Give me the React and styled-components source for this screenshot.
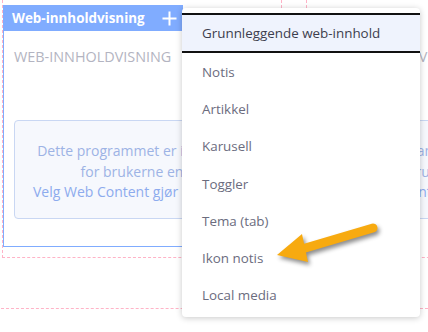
import React from 'react';
import styled, { createGlobalStyle } from 'styled-components';

const Global = createGlobalStyle`
  html, body { margin: 0; padding: 0; background: #fff; }
  body { font-family: "Open Sans", "Noto Sans", sans-serif; }
  * { box-sizing: border-box; }
`;

const Page = styled.div`
  position: relative;
  width: 428px;
  height: 332px;
  overflow: hidden;
  background: #fff;
`;

const Row = styled.div`
  display: flex;
  gap: 24px;
  padding-left: 2px;
`;

const DropColumn = styled.div`
  flex: 0 0 280px;
  height: 258px;
  border: 1px dashed #ffb3c7;
  border-top: none;
  padding: 5px 0 10px;
`;

const NextRow = styled.div`
  margin-top: 50px;
  margin-left: -4px;
  height: 40px;
  border-top: 1px dashed #ffb3c7;
`;

const Portlet = styled.section`
  display: flex;
  flex-direction: column;
  height: 242px;
`;

const Topper = styled.header`
  align-self: flex-start;
  display: flex;
  align-items: center;
  justify-content: space-between;
  width: 180px;
  height: 26px;
  padding: 0 6px 0 9px;
  background: #80acff;
  color: #fff;
  visibility: ${p => (p.$active ? 'visible' : 'hidden')};
`;

const TopperTitle = styled.h2`
  margin: 0;
  font-size: 13.4px;
  font-weight: 700;
  line-height: 26px;
`;

const Body = styled.div`
  flex: 1;
  border: 1px solid ${p => (p.$active ? '#80acff' : 'transparent')};
  border-top: none;
  padding: 16px 10px 0;
`;

const PortletName = styled.div`
  font-size: 14.4px;
  line-height: 20px;
  color: #b3b4c1;
  text-transform: uppercase;
`;

const InfoBox = styled.div`
  margin-top: 53px;
  height: 99px;
  padding-top: 20px;
  border: 1px solid #c9d7f3;
  border-radius: 4px;
  background: #f6f8fd;
  text-align: center;
  font-size: 14px;
  line-height: 20.5px;
  color: #9db3e5;
`;

const InfoLink = styled.a`
  display: block;
  color: #8dabee;
  text-decoration: none;
`;

const Menu = styled.ul`
  position: absolute;
  left: 182px;
  top: 8px;
  width: 238px;
  height: 309px;
  margin: 0;
  padding: 5px 0;
  list-style: none;
  background: #fff;
  border-radius: 4px;
  box-shadow: 0 1px 6px rgba(0, 0, 0, 0.22);
`;

const MenuItem = styled.li`
  height: ${p => (p.$focused ? '40px' : '37.3px')};
  padding: 0 20px;
  display: flex;
  align-items: center;
  font-size: 13.4px;
  color: ${p => (p.$focused ? '#3d3e4d' : '#6b6c7e')};
  background: ${p => (p.$focused ? '#eff3fd' : 'transparent')};
  border-top: ${p => (p.$focused ? '2px solid #111' : 'none')};
  border-bottom: ${p => (p.$focused ? '2px solid #111' : 'none')};
`;

const Pointer = styled.svg`
  position: absolute;
  left: 268px;
  top: 216px;
  width: 120px;
  height: 60px;
  overflow: visible;
  filter: drop-shadow(2px 3px 2px rgba(0, 0, 0, 0.45));
`;

const PlusIcon = () => (
  <svg width="15" height="15" viewBox="0 0 15 15" aria-hidden="true">
    <path d="M7.5 0.5v14M0.5 7.5h14" stroke="#fff" strokeWidth="2" fill="none" />
  </svg>
);

const WebContentPortlet = ({ active }) => (
  <Portlet>
    <Topper $active={active}>
      <TopperTitle>Web-innholdvisning</TopperTitle>
      <PlusIcon />
    </Topper>
    <Body $active={active}>
      <PortletName>Web-innholdvisning</PortletName>
      <InfoBox>
        Dette programmet er ikke synlig
        <br />
        for brukerne ennå.
        <InfoLink href="#">Velg Web Content gjør den synlig.</InfoLink>
      </InfoBox>
    </Body>
  </Portlet>
);

const items = [
  'Grunnleggende web-innhold',
  'Notis',
  'Artikkel',
  'Karusell',
  'Toggler',
  'Tema (tab)',
  'Ikon notis',
  'Local media',
];

export default function App() {
  return (
    <Page>
      <Global />
      <Row>
        <DropColumn>
          <WebContentPortlet active />
        </DropColumn>
        <DropColumn>
          <WebContentPortlet />
        </DropColumn>
      </Row>
      <NextRow />
      <Menu>
        {items.map((t, i) => (
          <MenuItem key={t} $focused={i === 0}>
            {t}
          </MenuItem>
        ))}
      </Menu>
      <Pointer viewBox="268 216 120 60">
        <line x1="302" y1="249" x2="373" y2="228" stroke="#f7aa10" strokeWidth="9" strokeLinecap="round" />
        <polygon points="277,255 302,234 308,262" fill="#f7aa10" />
      </Pointer>
    </Page>
  );
}
